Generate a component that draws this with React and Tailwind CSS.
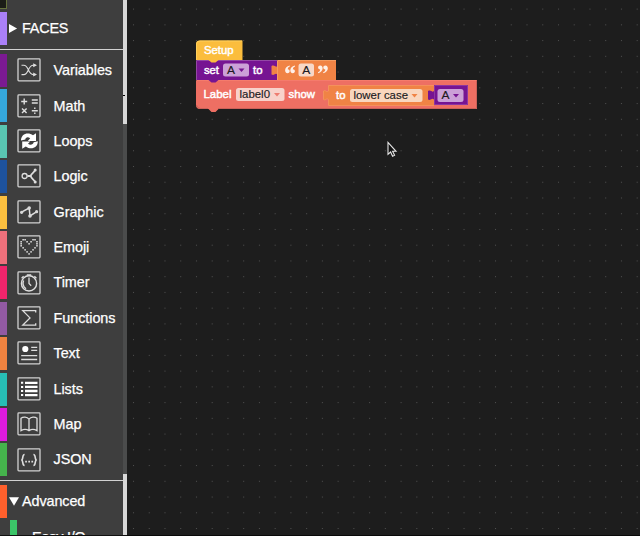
import React from "react";

const Icon = ({ children }) => (
  <svg viewBox="0 0 24 24" className="h-6 w-6 shrink-0" fill="none" stroke="#dedede" strokeWidth="1.1">
    <rect x="1" y="0.9" width="22" height="22" rx="0.8" stroke="#d2d2d2" strokeWidth="1.3" />
    {children}
  </svg>
);

const heart = [
  "011000110",
  "100101001",
  "100010001",
  "100000001",
  "010000010",
  "001000100",
  "000101000",
  "000010000",
];

const items = [
  { name: "Variables", width: "w-[58px]", color: "bg-[#7b1a92]", icon: (
    <>
      <path d="M4.5 7.2h2.2c5.5 0 3.8 9.4 9.6 9.4h2M4.5 16.6h2.2c5.5 0 3.8-9.4 9.6-9.4h2" />
      <path d="M16.2 5.2 20 7.2 16.2 9.2zM16.2 14.6 20 16.6 16.2 18.6z" fill="#dedede" stroke="none" />
    </>
  ) },
  { name: "Math", color: "bg-[#35a7dc]", icon: (
    <>
      <path strokeWidth="1.4" d="M4.2 7.5h6M7.2 4.6v6M14.8 6h6M14.8 9h6M5 14.4l4.6 4.6M9.6 14.4 5 19M14.8 16.7h6" />
      <path strokeWidth="1.4" d="M17.1 14.2h1.4M17.1 19.2h1.4" />
    </>
  ) },
  { name: "Loops", color: "bg-[#59c5b1]", icon: (
    <g fill="#fff" stroke="none">
      <path d="M4 11.6C3.8 4.8 11 2.4 16 6.2L19 4.2V12H10.8L13.2 9.3C10.8 7.3 8.5 8.3 8.3 10.5z" />
      <path d="M20.8 12.2C21 18.9 13.8 21.3 8.8 17.4L5.2 19.8V12.6H13.2L11 14.7C13.2 16.5 16.2 15.6 16.7 13.2z" />
    </g>
  ) },
  { name: "Logic", color: "bg-[#1d529d]", icon: (
    <>
      <circle cx="7.6" cy="12" r="2.5" strokeWidth="1.3" />
      <path strokeWidth="1.8" d="M10.4 12h3.4M18.3 5.8c-1 3.1-4.5 3.8-4.5 6.2s3.5 3.4 4.5 6.4" />
      <circle cx="18.2" cy="6" r="1.5" fill="#dedede" stroke="none" />
      <circle cx="18.2" cy="18" r="1.5" fill="#dedede" stroke="none" />
    </>
  ) },
  { name: "Graphic", color: "bg-[#fbbf3f]", icon: (
    <>
      <path strokeWidth="1.5" d="M4.5 12.2 12.2 8 13 16l6.8-4.3" />
      <g fill="#d8d8d8" stroke="none"><circle cx="4.6" cy="12.3" r="1.6" /><circle cx="12.2" cy="8" r="1.8" /><circle cx="13" cy="16" r="1.8" /><circle cx="19.6" cy="11.7" r="1.6" /></g>
    </>
  ) },
  { name: "Emoji", color: "bg-[#ee707b]", icon: (
    <g fill="#e4e4e4" stroke="none">
      {heart.flatMap((row, y) => [...row].map((v, x) => v === "1" &&
        <rect key={`${x}-${y}`} x={3.4 + x * 1.98} y={4 + y * 2.02} width="1.5" height="1.5" />))}
    </g>
  ) },
  { name: "Timer", color: "bg-[#f0246b]", icon: (
    <>
      <circle cx="12" cy="12.4" r="7.6" strokeWidth="1.4" />
      <path strokeWidth="1.3" d="M12 6.5v6l2.2 2.2M9.8 4h4.4M4.6 7.2l2-2M17.4 5.2l2 2" />
      <path strokeWidth="1.4" d="M6.6 9.5c-1.2 3-.2 6.3 2.4 8.3" />
    </>
  ) },
  { name: "Functions", color: "bg-[#925aa3]", icon: (
    <path strokeWidth="1.3" d="M18.7 6.5V4.7H5.8l7.2 7.2-7.2 7.2h12.9v-1.8" />
  ) },
  { name: "Text", color: "bg-[#f08340]", icon: (
    <>
      <circle cx="8.3" cy="8" r="3.1" fill="#fff" stroke="none" />
      <path strokeWidth="1.3" d="M14.2 6.4h6M14.2 9.4h6M4.2 14.7h16M4.2 18.5h16" />
    </>
  ) },
  { name: "Lists", color: "bg-[#27bdb5]", icon: (
    <>
      <path stroke="#fff" strokeWidth="2.3" d="M8 5.8h12.5M8 9.9h12.5M8 14h12.5M8 18.1h12.5" />
      <path stroke="#fff" strokeWidth="2" d="M4 5.8h2.2M4 9.9h2.2M4 14h2.2M4 18.1h2.2" />
    </>
  ) },
  { name: "Map", color: "bg-[#dd1bdd]", icon: (
    <path strokeWidth="1.3" d="M12 7.1C10 4.8 6.3 4.6 4 6.2v12.5c2.5-1.5 5.7-1.5 8 0 2.3-1.5 5.5-1.5 8 0V6.2C17.7 4.6 14 4.8 12 7.1zv11.6" />
  ) },
  { name: "JSON", color: "bg-[#45b34c]", icon: (
    <>
      <path strokeWidth="1.6" d="M7.6 6.5C4.7 6.5 6.8 12 4.2 12c2.6 0 .5 5.5 3.4 5.5M16.4 6.5c2.9 0 .8 5.5 3.4 5.5-2.6 0-.5 5.5-3.4 5.5" />
      <path strokeWidth="1.7" strokeDasharray="1.7 1.4" d="M8.2 13.7h8" />
    </>
  ) },
];

function Sidebar() {
  return (
    <aside className="flex h-full w-[127px] shrink-0 border-b border-[#111] bg-[#3e3e3e]">
      <div className="flex w-[123px] flex-col overflow-hidden text-[14.4px] text-white [-webkit-text-stroke:0.25px_white]">
        <div className="h-[9px] w-[7px] shrink-0 border-b border-r border-[#66733c] bg-[#1b1d17]" />
        <div className="mt-[3px] flex h-[33px] shrink-0 items-center">
          <span className="h-full w-[7px] bg-[#aa80f8]" />
          <svg viewBox="0 0 10 12" className="ml-[2px] h-[11px] w-[9px] shrink-0"><path d="M0 1v10l9-5z" fill="#fff" /></svg>
          <span className="ml-[4px] tracking-[-0.2px]">FACES</span>
        </div>
        <div className="mt-[4px] h-px shrink-0 bg-[#d2d2d2]" />
        <div className="mt-[3px] shrink-0">
          {items.map(({ name, color, icon }) => (
            <div key={name} className="flex h-[35.4px] items-start">
              <span className={`mt-[1px] h-[33px] w-[7px] shrink-0 ${color}`} />
              <div className="flex h-[34.5px] items-center pl-[10px]">
                <Icon>{icon}</Icon>
                <span className="ml-[12.5px] whitespace-nowrap pt-[1.4px] tracking-[-0.05px]">{name}</span>
              </div>
            </div>
          ))}
        </div>
        <div className="mt-[2px] h-px shrink-0 bg-[#d2d2d2]" />
        <div className="mt-[4px] flex h-[33px] shrink-0 items-center">
          <span className="h-full w-[7px] bg-[#ff602c]" />
          <svg viewBox="0 0 12 10" className="ml-[2px] h-[9px] w-[10px] shrink-0"><path d="M0 0h12L6 10z" fill="#fff" /></svg>
          <span className="ml-[3px] pt-[1.4px] tracking-[-0.1px]">Advanced</span>
        </div>
        <div className="mt-[2px] flex h-[33px] shrink-0 items-start pl-[10px]">
          <span className="h-full w-[7px] bg-[#3bc568]" />
          <span className="ml-[15px] pt-[7px] tracking-[-0.2px]">Easy I/O</span>
        </div>
      </div>
      <div className="flex w-1 flex-col bg-[#4b4c4c]">
        <div className="flex h-[124px] flex-col justify-end bg-[#d8d8d8] pb-7"><span className="h-px w-[2px] bg-black" /></div>
        <div className="mt-[350px] flex-1 bg-[#d8d8d8]" />
      </div>
    </aside>
  );
}

const Field = ({ x, y, w, h = 13, fill, label, tx, tw, arrow, arrowFill }) => (
  <g>
    <rect x={x} y={y} width={w} height={h} rx="2.5" fill={fill} />
    <text x={tx} y={y + 10.4} fontSize="11.8" fill="#201a22" stroke="#201a22" strokeWidth="0.15" textLength={tw} lengthAdjust="spacingAndGlyphs">{label}</text>
    {arrow && <path d={`M${arrow} ${y + 5}h6l-3 3.6z`} fill={arrowFill} />}
  </g>
);

const Word = ({ x, y, w, children }) => (
  <text x={x} y={y} fontSize="11.6" fill="#fff" stroke="#fff" strokeWidth="0.45" textLength={w} lengthAdjust="spacingAndGlyphs">{children}</text>
);

function Workspace() {
  return (
    <main className="h-full flex-1 overflow-hidden border-b border-[#090909] bg-[#1d1d1d]">
      <svg width="513" height="536" viewBox="127 0 513 536" fontFamily='"Liberation Sans", Arial, sans-serif'>
        <defs>
          <pattern id="grid" x="133" y="8.6" width="15.74" height="15.74" patternUnits="userSpaceOnUse">
            <rect width="1" height="1" fill="#505050" />
          </pattern>
        </defs>
        <rect x="127" width="513" height="536" fill="url(#grid)" />

        <path d="M196 80.5H477V109H218.5L215.5 112H211.5L208.5 109H200Q196 109 196 105z" fill="#ee6f63" />
        <path d="M196.5 80.5H476.5V108.5" fill="none" stroke="#f57b6c" />
        <path d="M476.5 81V108.5H218M208 108.5H200Q197 108 196.5 105" fill="none" stroke="#cb6158" />
        <path d="M196 60.5H278V80H218.5L215.5 82.6H211.5L208.5 80H196z" fill="#761492" />
        <path d="M196.5 80V60.5H277" fill="none" stroke="#9348a5" />
        <path d="M196 44Q196 40.5 199.5 40.5H242.5V60H218.5L215.5 62.6H211.5L208.5 60H196z" fill="#fbbd3d" />
        <path d="M196.5 60V44Q196.5 41 200 41H242" fill="none" stroke="#ffd05c" />
        <path d="M277.5 60.5H336V80H277.5V74.5C275 72.5 275 76 271.5 74.5V66C275 64.5 275 68 277.5 66z" fill="#f08345" />
        <path d="M277.5 80V60.5H336" fill="none" stroke="#f59c62" />
        <path d="M328.5 85.5H434V105.5H328.5V99.5C326 97.5 326 101 323.5 99.5V91C326 89.5 326 93 328.5 91z" fill="#f08345" />
        <path d="M434 85.5H328.5V91C326 93 326 89.5 323.5 91V99.5C326 101 326 97.5 328.5 99.5V105.5H434" fill="none" stroke="#f5965e" strokeWidth="0.8" />
        <path d="M434 85H468V105H434V99.5C431.5 97.5 431.5 101 428 99.5V91C431.5 89.5 431.5 93 434 91z" fill="#761492" />
        <path d="M434.5 105V85.5H467.5V104.5H434" fill="none" stroke="#923fa5" strokeWidth="0.8" />

        <Word x={204} y={54} w={29.5}>Setup</Word>
        <Word x={204} y={74} w={15}>set</Word>
        <Field x={223} y={63.5} w={26} fill="#cba0d7" label="A" tx={227} tw={8} arrow={238.5} arrowFill="#761492" />
        <Word x={253} y={74} w={9.5}>to</Word>
        <g fill="#fff" fillOpacity="0.88">
          <path d="M289.8 65.5C283.5 67 284.5 73.2 287.5 73.2C290.5 73.2 290.3 69.3 287.7 69.3C287.7 68 288.5 67 289.8 66.5z" />
          <path d="M295 65.5C288.7 67 289.7 73.2 292.7 73.2C295.7 73.2 295.5 69.3 292.9 69.3C292.9 68 293.7 67 295 66.5z" />
          <path d="M318 73.2C324.3 71.7 323.3 65.5 320.3 65.5C317.3 65.5 317.5 69.4 320.1 69.4C320.1 70.7 319.3 71.7 318 72.2z" />
          <path d="M323.2 73.2C329.5 71.7 328.5 65.5 325.5 65.5C322.5 65.5 322.7 69.4 325.3 69.4C325.3 70.7 324.5 71.7 323.2 72.2z" />
        </g>
        <Field x={298.5} y={63.5} w={15.5} fill="#f8d8c8" label="A" tx={302.3} tw={8} />
        <Word x={203.5} y={98} w={28}>Label</Word>
        <Field x={236} y={88} w={48.5} fill="#f8d2cb" label="label0" tx={239.5} tw={30.5} arrow={274} arrowFill="#ee7c70" />
        <Word x={288.5} y={98} w={26.5}>show</Word>
        <Word x={336} y={99} w={9.5}>to</Word>
        <Field x={350} y={89} w={72.5} fill="#f9d6be" label="lower case" tx={353.5} tw={54.5} arrow={411.5} arrowFill="#f08345" />
        <Field x={437.5} y={89} w={26} fill="#cba0d7" label="A" tx={441.5} tw={8} arrow={453} arrowFill="#761492" />

        <path d="M388 142.5V154.3L390.6 152L392.6 156.2L394.6 155.3L392.6 151.3H396z" fill="#111" stroke="#e6e6e6" strokeWidth="1.1" />
      </svg>
    </main>
  );
}

export default function App() {
  return (
    <div className="flex h-[536px] w-[640px] overflow-hidden bg-[#1d1d1d] font-['Liberation_Sans',Arial,sans-serif]">
      <Sidebar />
      <Workspace />
    </div>
  );
}
